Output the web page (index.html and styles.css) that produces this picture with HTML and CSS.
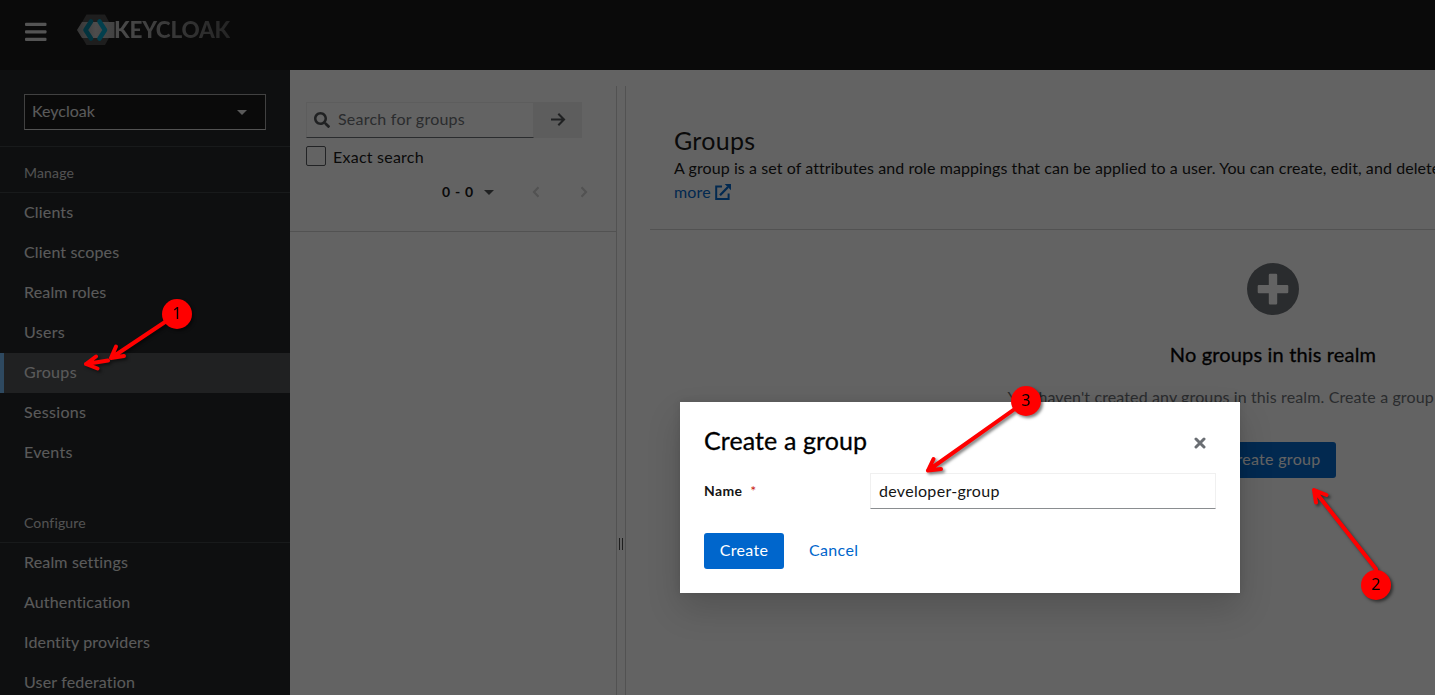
FILE: index.html
```html
<!DOCTYPE html>
<html lang="en">
<head>
<meta charset="utf-8">
<title>Keycloak Administration Console</title>
<link rel="stylesheet" href="styles.css">
</head>
<body>
<div class="page">
  <header class="masthead">
    <svg class="burger" viewBox="0 0 22 20" width="22" height="20"><rect x="0" y="0.7" width="21.5" height="3.4" rx="1"/><rect x="0" y="8.2" width="21.5" height="3.4" rx="1"/><rect x="0" y="15.7" width="21.5" height="3.4" rx="1"/></svg>
    <div class="brand">
      <svg width="38" height="32" viewBox="0 0 38 32">
        <defs><linearGradient id="bar" x1="0" x2="1"><stop offset="0" stop-color="#888"/><stop offset=".5" stop-color="#c4c4c4"/><stop offset="1" stop-color="#a8a8a8"/></linearGradient></defs>
        <path d="M9.500 .5H28L36.500 16 28 31H9.500L.5 16Z" fill="#4a4a4a"/>
        <path d="M5 8H37.500V24H5L0 16Z" fill="url(#bar)"/>
        <path d="M14 7.500L8.500 16l5.500 8.500" fill="none" stroke="#00819f" stroke-width="4.600" stroke-linejoin="round" stroke-linecap="round"/>
        <path d="M22.500 7.500L28 16l-5.500 8.500" fill="none" stroke="#00a0c4" stroke-width="4.600" stroke-linejoin="round" stroke-linecap="round"/>
      </svg>
      <span class="brand-name">KEYCLOAK</span>
    </div>
  </header>
  <div class="body">
    <nav class="sidebar">
      <div class="realm"><div class="realm-select"><span>Keycloak</span><i class="caret"></i></div></div>
      <section class="nav-section">
        <h2>Manage</h2>
        <a>Clients</a><a>Client scopes</a><a>Realm roles</a><a class="loose">Users</a><a class="current loose">Groups</a><a class="loose">Sessions</a><a class="loose">Events</a>
      </section>
      <section class="nav-section">
        <h2>Configure</h2>
        <a>Realm settings</a><a>Authentication</a><a>Identity providers</a><a>User federation</a>
      </section>
    </nav>
    <main class="content">
      <div class="tree">
        <div class="search">
          <div class="search-box">
            <svg width="16" height="16" viewBox="0 0 512 512"><path d="M505 442.700L405.300 343c-4.500-4.500-10.600-7-17-7H372c27.600-35.300 44-79.700 44-128C416 93.100 322.900 0 208 0S0 93.100 0 208s93.100 208 208 208c48.300 0 92.700-16.400 128-44v16.300c0 6.400 2.500 12.500 7 17l99.700 99.700c9.400 9.400 24.600 9.400 33.900 0l28.300-28.300c9.400-9.400 9.400-24.600.1-34zM208 336c-70.700 0-128-57.200-128-128 0-70.700 57.200-128 128-128 70.700 0 128 57.200 128 128 0 70.700-57.200 128-128 128z"/></svg>
            <span>Search for groups</span>
          </div>
          <div class="search-go"><svg width="16" height="16" viewBox="0 0 16 16"><path d="M1 7.500H14M8.300 1.700L14 7.500l-5.700 5.800" fill="none" stroke="#4f5255" stroke-width="2.100"/></svg></div>
        </div>
        <div class="exact"><span class="checkbox"></span><span class="exact-label">Exact search</span></div>
        <div class="pager">
          <b>0 - 0</b><i class="caret small"></i>
          <svg class="prev" width="8" height="12" viewBox="0 0 8 12"><path d="M6.500 1.300L2 6l4.500 4.700"/></svg>
          <svg class="next" width="8" height="12" viewBox="0 0 8 12"><path d="M1.500 1.300L6 6l-4.500 4.700"/></svg>
        </div>
      </div>
      <div class="splitter"><i></i><i></i></div>
      <div class="detail">
        <div class="intro">
          <h1>Groups</h1>
          <p class="lead">A group is a set of attributes and role mappings that can be applied to a user. You can create, edit, and delete groups</p>
          <a class="more"><span>more</span><svg width="16" height="16" viewBox="0 0 16 16"><path d="M7 2.500H1.200V14.900H13.600V9.500" fill="none" stroke="#06c" stroke-width="2"/><path d="M5 11.200L13 3" stroke="#06c" stroke-width="2.300"/><path d="M9.700 0H16V6.300Z" fill="#06c"/></svg></a>
        </div>
        <div class="empty">
          <svg width="52" height="52" viewBox="0 0 52 52"><circle cx="26" cy="26" r="26" fill="#6a6e73"/><path d="M23 10.800h6q1.200 0 1.200 1.200v9.900h9.900q1.200 0 1.200 1.200v6q0 1.200-1.200 1.200h-9.900v9.900q0 1.200-1.200 1.200h-6q-1.200 0-1.200-1.200v-9.900h-9.900q-1.200 0-1.200-1.200v-6q0-1.200 1.200-1.200h9.900v-9.900q0-1.200 1.200-1.200z" fill="#fff"/></svg>
          <h2>No groups in this realm</h2>
          <p>You haven't created any groups in this realm. Create a group to get started.</p>
          <span class="btn wide">Create group</span>
        </div>
      </div>
    </main>
  </div>
</div>
<div class="backdrop"></div>
<div class="modal">
  <div class="modal-head"><h1>Create a group</h1><svg width="12" height="12" viewBox="0 0 12 12"><path d="M2 2l8 8M10 2l-8 8" stroke="#6a6e73" stroke-width="3" stroke-linecap="round"/></svg></div>
  <div class="field"><label>Name<em>*</em></label><div class="input">developer-group</div></div>
  <div class="actions"><span class="btn">Create</span><span class="link">Cancel</span></div>
</div>
<svg class="marks" width="1435" height="695" viewBox="0 0 1435 695">
  <g class="arrows">
    <path d="M177 314L111 358M116 346.500L111 358L124 356"/>
    <path d="M108 360.500L86 364M96 356.500L86 364L97.500 368.500"/>
    <path d="M1376 585V569L1314 490M1326.500 495L1314 490L1316 502.500"/>
    <path d="M1026 401L928 470.500M933.500 459L928 470.500L941 469"/>
  </g>
  <g class="dots"><circle cx="177" cy="314" r="15"/><circle cx="1376" cy="585" r="15"/><circle cx="1026" cy="401" r="15"/></g>
  <g class="nums"><text x="177" y="319">1</text><text x="1376" y="590">2</text><text x="1026" y="406">3</text></g>
</svg>
</body>
</html>
```
FILE: styles.css
```css
* { box-sizing: border-box; }
body { margin: 0; overflow: hidden; font: 16px/24px Lato, "Noto Sans", sans-serif; letter-spacing: .16px; color: #151515; }
h1, h2, p { margin: 0; font-weight: 400; }
.page { height: 695px; display: flex; flex-direction: column; overflow: hidden; }

.masthead { flex: none; height: 70px; background: #151515; display: flex; align-items: flex-start; padding: 14px 25px; gap: 30px; }
.burger { fill: #d8d8d8; margin-top: 8px; }
.brand { display: flex; align-items: flex-start; }
.brand-name { margin-left: -1px; font: 900 22.500px/32px Lato, sans-serif; letter-spacing: -.2px; background: linear-gradient(90deg, #c0c0c0, #5c5c5c); background-clip: text; -webkit-background-clip: text; color: transparent; }

.body { flex: 1; min-height: 0; display: flex; }
.sidebar { flex: none; width: 290px; background: #212427; color: #e8e8e8; }
.realm { padding: 24px 24px 16px; border-bottom: 1px solid #3c3f42; }
.realm-select { height: 36px; padding: 0 18px 0 7px; display: flex; align-items: center; justify-content: space-between; background: #151515; border: 1px solid #a5a5a5; border-bottom-color: #d2d2d2; }
.realm-select span { padding-bottom: 2px; letter-spacing: 0; }
.caret { border: 5px solid transparent; border-top-color: currentColor; border-bottom: 0; }
.nav-section { display: flex; flex-direction: column; }
.nav-section + .nav-section { padding-top: 24px; }
.nav-section h2 { height: 46px; padding: 14px 24px 0; font-size: 14px; border-bottom: 1px solid #3c3f42; color: #d2d2d2; }
.nav-section a { height: 40px; padding: 7px 24px 9px; }
.nav-section .loose { letter-spacing: .33px; }
.nav-section .current { background: #4f5255; border-left: 4px solid #73bcf7; padding-left: 20px; }

.content { flex: 1; min-width: 0; display: flex; overflow: hidden; background: #fff; }
.tree { flex: none; width: 326px; height: 162px; padding: 32px 34px 0 16px; border-bottom: 1px solid #d2d2d2; }
.search { display: flex; height: 36px; }
.search-box { flex: none; width: 228px; display: flex; align-items: center; gap: 8px; padding-left: 7px; border: 1px solid #f0f0f0; border-bottom-color: #6a6e73; color: #6a6e73; }
.search-box svg { fill: #4f5255; }
.search-box span { padding-bottom: 2px; letter-spacing: .24px; }
.search-go { flex: none; width: 48px; background: #f0f0f0; display: flex; align-items: center; justify-content: center; }
.exact { display: flex; margin-top: 8px; gap: 7px; }
.exact-label { margin-top: -1px; padding-bottom: 1px; letter-spacing: .24px; }
.checkbox { width: 20px; height: 20px; border: 1px solid #55585c; border-radius: 2px; }
.pager { display: flex; align-items: center; height: 24px; margin-top: 10px; padding-left: 136px; }
.pager b { flex: none; font-size: 14px; font-weight: 700; letter-spacing: .7px; width: 42px; }
.caret.small { flex: none; color: #4f5255; }
.pager svg { flex: none; fill: none; stroke: #d2d2d2; stroke-width: 2.2px; }
.prev { margin-left: 38px; }
.next { margin-left: 40px; }
.splitter { flex: none; width: 10px; margin-top: 16px; border: solid #d2d2d2; border-width: 0 1px; display: flex; align-items: flex-start; justify-content: center; gap: 2px; padding-top: 452px; }
.splitter i { width: 1px; height: 12px; background: #4a4a4a; }
.detail { flex: none; width: 1270px; padding: 0 0 0 24px; }
.intro { height: 160px; padding: 55px 24px 0; border-bottom: 1px solid #d2d2d2; }
.intro h1 { font-size: 25px; line-height: 31px; letter-spacing: .3px; }
.lead { white-space: nowrap; letter-spacing: .08px; }
.more { display: flex; align-items: center; gap: 4px; color: #06c; }
.empty { display: flex; flex-direction: column; align-items: center; padding-top: 33px; }
.empty h2 { font-size: 20px; line-height: 30px; margin-top: 24px; color: #000; -webkit-text-stroke: .3px; }
.empty p { margin: 16px 0 33px; color: #6a6e73; white-space: nowrap; letter-spacing: .12px; }
.btn { display: flex; align-items: center; justify-content: center; width: 80px; height: 36px; padding-bottom: 2px; border-radius: 3px; background: #06c; color: #fff; letter-spacing: .3px; }
.btn.wide { width: 126px; }

.backdrop { position: absolute; inset: 0; background: rgba(3, 3, 3, .62); }
.modal { position: absolute; left: 680px; top: 402px; width: 560px; height: 191px; padding: 24px; background: #fff; box-shadow: 0 16px 32px rgba(3, 3, 3, .16), 0 0 8px rgba(3, 3, 3, .1); }
.modal-head { display: flex; justify-content: space-between; padding-right: 10px; height: 47px; color: #000; }
.modal-head h1 { margin-top: -1px; font-size: 25px; line-height: 31px; letter-spacing: .1px; -webkit-text-stroke: .3px; }
.modal-head svg { margin-top: 11px; }
.field { display: flex; align-items: center; }
.field label { width: 166px; font-size: 14px; font-weight: 700; letter-spacing: .35px; }
.field em { margin-left: 8px; color: #c9190b; font-style: normal; font-weight: 400; }
.input { flex: 1; height: 36px; padding: 5px 8px; border: 1px solid #f0f0f0; border-bottom-color: #8a8d90; letter-spacing: .3px; }
.actions { display: flex; align-items: center; gap: 25px; margin-top: 24px; }
.link { padding-bottom: 2px; color: #06c; letter-spacing: .33px; }

.marks { position: absolute; left: 0; top: 0; filter: drop-shadow(2px 2px 1.500px rgba(0, 0, 0, .5)); }
.arrows { fill: none; stroke: #f00; stroke-width: 4px; stroke-linecap: round; stroke-linejoin: round; }
.dots { fill: #f00; }
.nums { font: 16px "Noto Sans", sans-serif; letter-spacing: 0; text-anchor: middle; fill: #000; }
```
